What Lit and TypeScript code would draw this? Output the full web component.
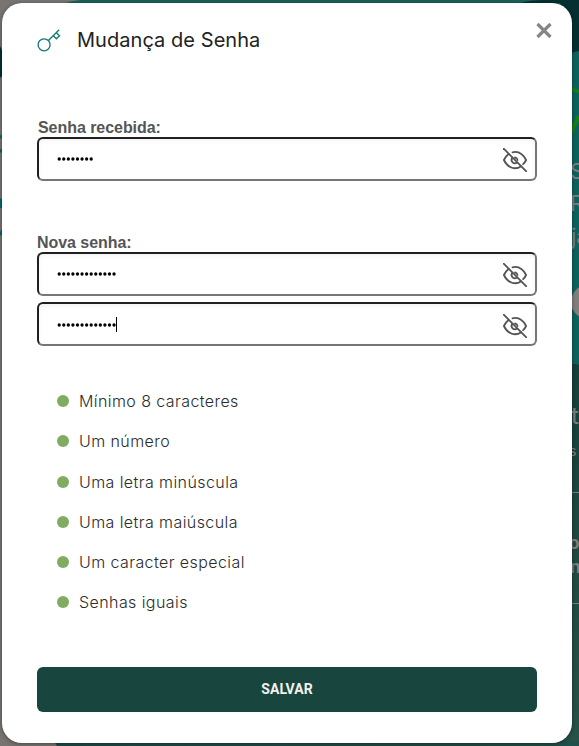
import { LitElement, html, css, svg } from "lit";
import { customElement, property } from "lit/decorators.js";

@customElement("page-backdrop")
class PageBackdrop extends LitElement {
  static styles = css`
    :host { display: block; position: absolute; inset: 0; }
    svg { display: block; }
    text { fill: #7d8080; font-family: Inter, sans-serif; }
  `;
  render() {
    return html`<svg width="579" height="746" viewBox="0 0 579 746" aria-hidden="true">
      <defs>
        <linearGradient id="low" x1="0" y1="0" x2="0" y2="1">
          <stop offset="0" stop-color="#163f3a" />
          <stop offset="1" stop-color="#275247" />
        </linearGradient>
        <linearGradient id="foot" x1="0" y1="0" x2="1" y2="0">
          <stop offset="0" stop-color="#1c4b49" />
          <stop offset="1" stop-color="#20504a" />
        </linearGradient>
      </defs>
      <rect width="579" height="746" fill="#777472" />
      <path d="M66 3Q72 1 80 0H579V30H66Z" fill="#186158" />
      <rect x="560" y="20" width="19" height="360" fill="#0c625d" />
      <path d="M521 3Q530 0 545 0H579V51L571 53V20L560 3Z" fill="#052f31" />
      <rect x="560" y="364" width="19" height="382" fill="url(#low)" />
      <path d="M560 320H579V365L571 363H560Z" fill="#0c625d" />
      <path d="M54 741L57 746H579V741Z" fill="url(#foot)" />
      <path d="M0 46L3 52V75L0 78Z" fill="#052f31" />
      <path d="M0 136L3 138M0 152L3 149M0 235L3 230" stroke="#08666a" stroke-width="3" />
      <path d="M0 198L3 200V208H0Z" fill="#08666a" />
      <path d="M570 88L579 92M570 134L579 116" fill="none" stroke="#138014" stroke-width="4" />
      ${svg`<text x="570" y="179" font-size="22">S</text>
      <text x="570" y="211" font-size="22">R</text>
      <text x="571" y="244" font-size="22">já</text>`}
      <circle cx="588" cy="302" r="17" fill="#807f7e" />
      <text x="571" y="424" font-size="24">t</text>
      <text x="569" y="456" font-size="14">s</text>
      <path d="M570 492.500H579M570 603.500H579" stroke="#79807c" />
      <text x="567" y="520" font-size="15">)</text>
      <text x="569" y="549" font-size="17" font-weight="700">o</text>
      <text x="570" y="573" font-size="17" font-weight="700">n</text>
    </svg>`;
  }
}

@customElement("password-field")
class PasswordField extends LitElement {
  @property({ type: Number }) length = 8;
  @property({ type: Boolean }) caret = false;

  static styles = css`
    :host {
      display: flex; align-items: center; justify-content: space-between;
      box-sizing: border-box; height: 44px; padding: 1px 8px 0 18px;
      border: 2px solid; border-color: #202022 #767676 #767676 #202022;
      border-radius: 6px; background: #fff; box-shadow: inset 0 2px 5px #0000000d;
    }
    .value { display: flex; align-items: center; height: 15px; margin-top: -3px; }
    svg { display: block; }
    .dots { height: 4px; margin-top: 1px; }
    .caret { width: 1px; height: 15px; margin-left: -1px; background: #000; }
    .eye { width: 24px; height: 24px; margin-top: 1px; }
    :host([caret]) .eye { margin-top: 3px; }
    :host([caret]) .value { margin-top: -1px; }
  `;
  render() {
    const width = this.length * 4.6;
    return html`
      <span class="value">
        <svg class="dots" width=${width} height="4">
          ${Array.from({ length: this.length }, (_, i) => svg`<circle cx=${2.2 + i * 4.57} cy="2" r="1.65" />`)}
        </svg>
        ${this.caret ? html`<i class="caret"></i>` : ""}
      </span>
      <svg class="eye" viewBox="0 0 24 24" fill="none" stroke="#545454" stroke-width="1.800" stroke-linecap="round" stroke-linejoin="round">
        <path d="M.7.7 23.300 23.300" />
        <path d="M9.500 4.300C15.500 2.900 20.200 6.400 23.100 12Q21.900 14.500 20.100 16.200" />
        <path d="M5.600 6Q2.700 8.200.9 12C5 20.500 12.500 22.100 18.200 18.200" />
        <path d="M9.100 10C7.200 13.500 10.700 16.700 14 14.800M12 9.500Q14.300 10 14.500 12" />
      </svg>`;
  }
}

@customElement("app-root")
class AppRoot extends LitElement {
  private rules = [
    "Mínimo 8 caracteres", "Um número", "Uma letra minúscula",
    "Uma letra maiúscula", "Um caracter especial", "Senhas iguais",
  ];
  static styles = css`
    :host {
      display: block; position: relative; box-sizing: border-box; height: 746px;
      padding: 3px 7px 3px 2px; overflow: hidden; font-family: Inter, sans-serif;
    }
    .modal {
      position: relative; display: flex; flex-direction: column; box-sizing: border-box;
      height: 740px; padding: 24px 35px 31px; border-radius: 20px; background: #fff;
      box-shadow: 0 1px 4px #0006;
    }
    header { display: flex; align-items: center; gap: 16px; height: 26px; }
    .key { width: 24px; height: 24px; margin-bottom: 1px; }
    h1 { margin: 0; color: #222; font-size: 20px; line-height: 26px; font-weight: 400; letter-spacing: .05px; }
    .close { position: absolute; top: 19px; right: 20px; width: 16px; height: 17px; padding: 0; border: 0; background: none; }
    .close svg { display: block; }
    .group { display: flex; flex-direction: column; gap: 6px; margin-top: 53px; }
    .received { margin-top: 66px; }
    .received label { padding-left: 1px; }
    label { height: 18px; margin-bottom: -6px; color: #555; font: 700 16px/18px "Liberation Sans", Arial, sans-serif; letter-spacing: -.05px; }
    ul {
      display: flex; flex-direction: column; gap: 16.300px; margin: 43px 0 0; padding: 0 20px;
      list-style: none; color: #2b2b2b; font-size: 16px; line-height: 24px; font-weight: 300; letter-spacing: .42px;
    }
    li { display: flex; align-items: center; gap: 10px; }
    .bullet { width: 12px; height: 12px; border-radius: 50%; background: #80ac61; }
    .save {
      height: 45px; margin-top: auto; padding: 0; border: 0; border-radius: 6px;
      background: #19453f; color: #f3f1ec; font: 700 14px/45px Roboto, sans-serif;
    }
  `;
  render() {
    return html`
      <page-backdrop></page-backdrop>
      <section class="modal">
        <header>
          <svg class="key" viewBox="0 0 24 24" fill="none" stroke="#147b75" stroke-width="1.350">
            <circle cx="7.100" cy="16.800" r="6" />
            <path d="M11.400 12.400 22.200 1.700M16.300 7.700l3.100 3 3.100-3-3.100-3" />
          </svg>
          <h1>Mudança de Senha</h1>
        </header>
        <button class="close" aria-label="Fechar">
          <svg width="16" height="17" viewBox="0 0 16 17"><path d="M1.500 2l13 13m0-13-13 13" stroke="#858585" stroke-width="3.200" /></svg>
        </button>
        <div class="group received">
          <label>Senha recebida:</label>
          <password-field length="8"></password-field>
        </div>
        <div class="group">
          <label>Nova senha:</label>
          <password-field length="13"></password-field>
          <password-field length="13" caret></password-field>
        </div>
        <ul>${this.rules.map((rule) => html`<li><span class="bullet"></span>${rule}</li>`)}</ul>
        <button class="save">SALVAR</button>
      </section>`;
  }
}
